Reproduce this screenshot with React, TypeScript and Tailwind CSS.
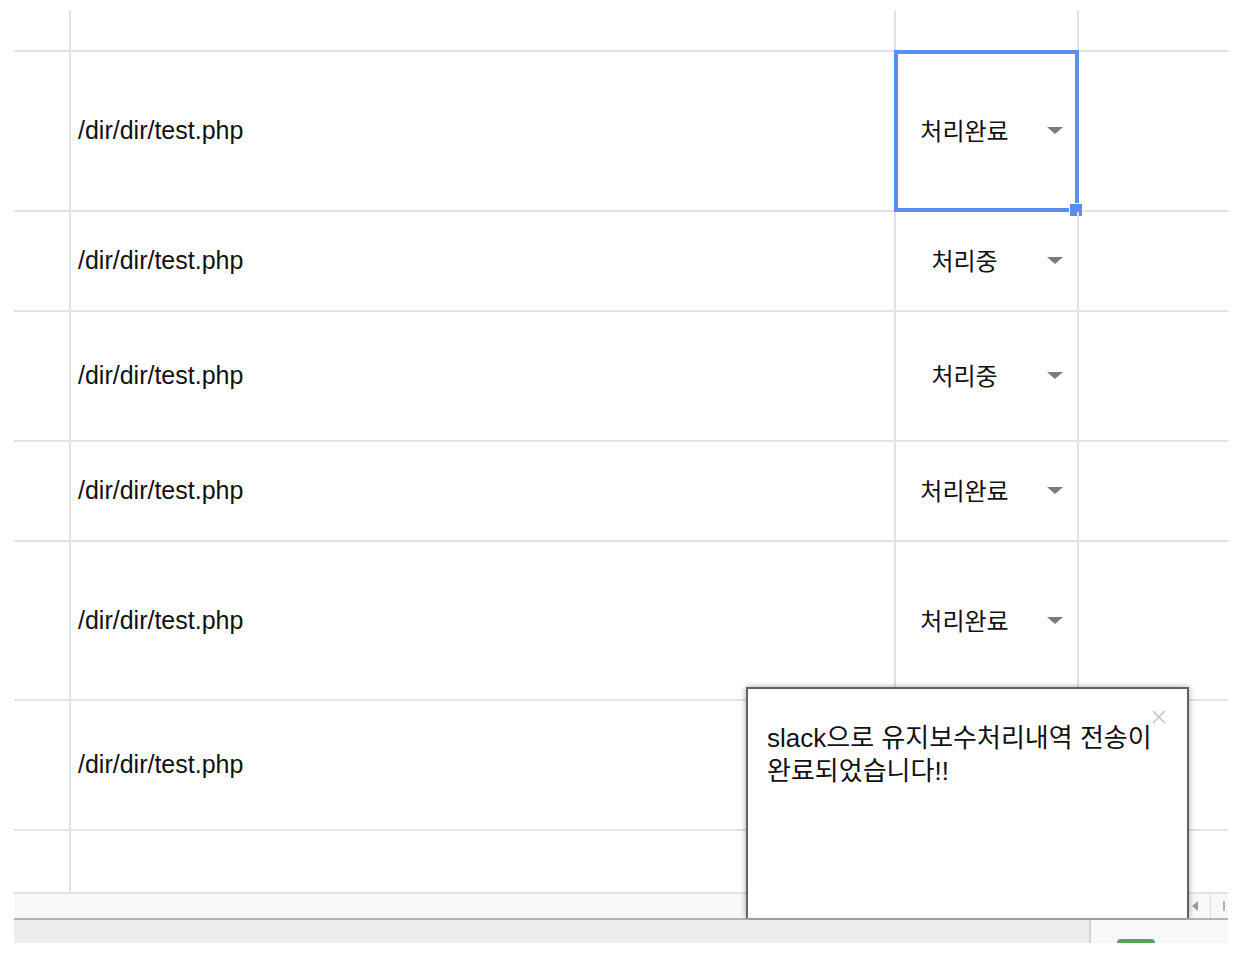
import React from "react"

type Row = {
    h: string
    status?: string
    selected?: boolean
    path?: boolean
}

const rows: Row[] = [
    { h: "h-[42px]" },
    { h: "h-[160px]", status: "처리완료", selected: true, path: true },
    { h: "h-[100px]", status: "처리중", path: true },
    { h: "h-[130px]", status: "처리중", path: true },
    { h: "h-[100px]", status: "처리완료", path: true },
    { h: "h-[159px]", status: "처리완료", path: true },
    { h: "h-[130px]", path: true },
    { h: "h-[63px]" },
]

const Caret = () => (
    <svg width="16" height="8" viewBox="0 0 16 8" className="shrink-0">
        <polygon points="0,0 16,0 8,7" fill="#7b7b7b" />
    </svg>
)

const SheetRow = ({ row }: { row: Row }) => (
    <div className={`flex ${row.h} border-b-2 border-[#e2e2e2]`}>
        <div className="w-[57px] shrink-0 border-r-2 border-[#e2e2e2]" />
        <div className="w-[825px] shrink-0 border-r-2 border-[#e2e2e2] flex items-center pl-[7px] text-[25px] text-[#111]">
            {row.path && <span>/dir/dir/test.php</span>}
        </div>
        <div className="relative w-[183px] shrink-0 border-r-2 border-[#e2e2e2] flex items-center">
            {row.status && (
                <>
                    <div className="flex-1 pl-[4px] text-center font-['Noto_Sans_CJK_KR',sans-serif] text-[24px] text-[#111] pb-[2px]">
                        {row.status}
                    </div>
                    <div className="w-[48px] flex items-center pl-[18px]">
                        <Caret />
                    </div>
                </>
            )}
            {row.selected && (
                <div className="absolute -left-[2px] -top-[2px] -right-[2px] -bottom-[2px] border-4 border-[#5b8def]">
                    <div className="absolute -right-[8px] -bottom-[9px] w-[14px] h-[14px] bg-[#5b8def] border border-white" />
                </div>
            )}
        </div>
        <div className="flex-1" />
    </div>
)

export default function App() {
    return (
        <div className="w-[1260px] h-[958px] bg-white overflow-hidden font-['Liberation_Sans','Noto_Sans_CJK_KR',sans-serif]">
            <div className="relative h-[920px] overflow-hidden">
                <div className="pt-[10px] pl-[14px] pr-[32px]">
                    {rows.map((r, i) => (
                        <SheetRow key={i} row={r} />
                    ))}
                    <div className="flex h-[24px] bg-[#f8f8f8]">
                        <div className="flex-1" />
                        <div className="w-[40px] flex items-center">
                            <svg width="6" height="10" viewBox="0 0 6 10" className="ml-[4px]">
                                <polygon points="6,0 6,10 0,5" fill="#9a9a9a" />
                            </svg>
                            <div className="ml-[12px] w-px h-full bg-[#dcdcdc]" />
                            <div className="ml-[12px] w-[2px] h-[10px] bg-[#b5b5b5]" />
                        </div>
                    </div>
                    <div className="h-[2px] bg-[#b3b3b3]" />
                </div>

                <div className="absolute left-[746px] top-[687px] w-[443px] h-[231px] bg-white border-2 border-b-0 border-[#626262] shadow-[0_0_6px_rgba(0,0,0,0.35)]">
                    <svg width="14" height="14" viewBox="0 0 14 14" className="absolute right-[21px] top-[21px]">
                        <path d="M1 1 L13 13 M13 1 L1 13" stroke="#c4c4c4" strokeWidth="1.6" />
                    </svg>
                    <div className="pl-[19px] pt-[33px] text-[26px] leading-[33px] text-[#111]">
                        slack으로 유지보수처리내역 전송이
                        <br />
                        완료되었습니다!!
                    </div>
                </div>
            </div>

            <div className="flex h-[23px] ml-[14px] mr-[32px] overflow-hidden">
                <div className="w-[1077px] bg-[#ededed] border-r-2 border-[#d4d4d4]" />
                <div className="flex-1 bg-[#f8f8f8] pl-[26px] pt-[19px]">
                    <div className="w-[38px] h-[10px] rounded-[4px] bg-[#54a060]" />
                </div>
            </div>
        </div>
    )
}
